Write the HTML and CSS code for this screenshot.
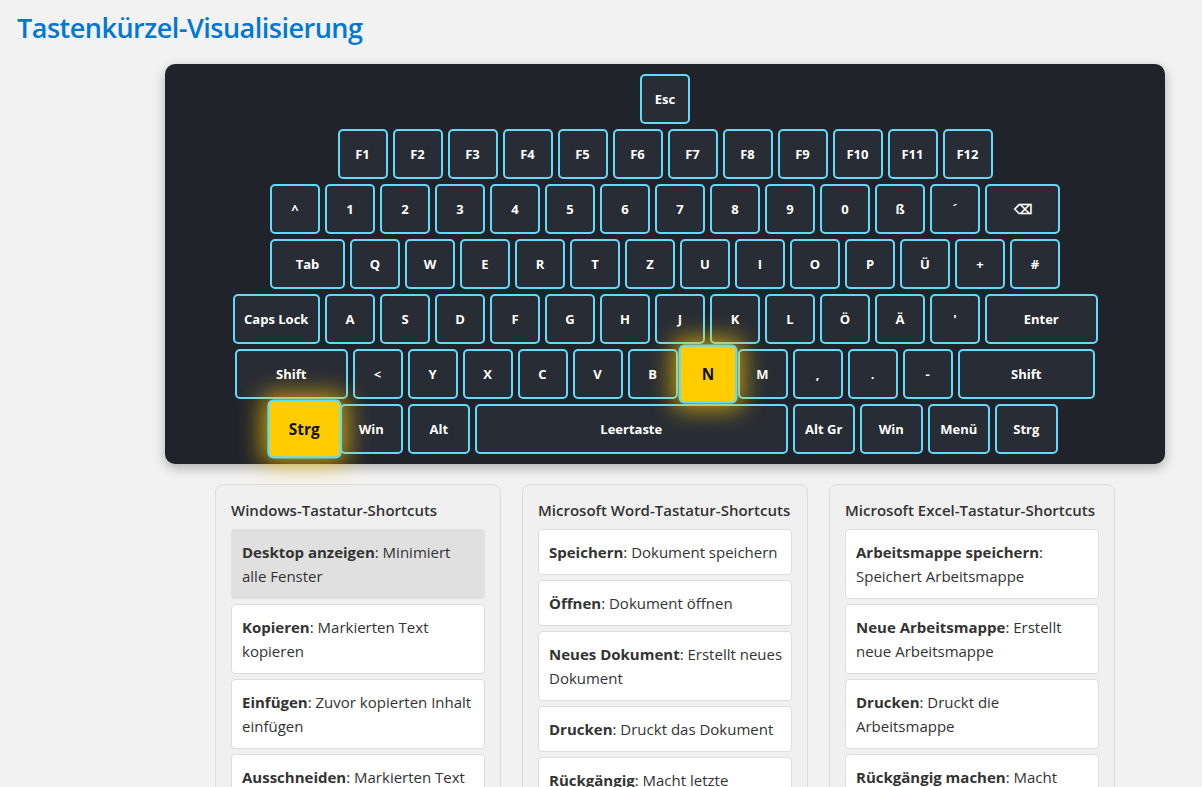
FILE: index.html
```html
<!DOCTYPE html>
<html lang="de">
<head>
<meta charset="utf-8">
<title>Tastenkürzel-Visualisierung</title>
<link rel="stylesheet" href="styles.css">
</head>
<body>
<h1 class="page-title">Tastenkürzel-Visualisierung</h1>
<main class="main">
  <div class="keyboard">
    <div class="row">
      <div class="key">Esc</div>
    </div>
    <div class="row">
      <div class="key">F1</div><div class="key">F2</div><div class="key">F3</div><div class="key">F4</div>
      <div class="key">F5</div><div class="key">F6</div><div class="key">F7</div><div class="key">F8</div>
      <div class="key">F9</div><div class="key">F10</div><div class="key">F11</div><div class="key">F12</div>
    </div>
    <div class="row">
      <div class="key">^</div><div class="key">1</div><div class="key">2</div><div class="key">3</div>
      <div class="key">4</div><div class="key">5</div><div class="key">6</div><div class="key">7</div>
      <div class="key">8</div><div class="key">9</div><div class="key">0</div><div class="key">ß</div>
      <div class="key">´</div><div class="key w15">⌫</div>
    </div>
    <div class="row">
      <div class="key w15">Tab</div><div class="key">Q</div><div class="key">W</div><div class="key">E</div>
      <div class="key">R</div><div class="key">T</div><div class="key">Z</div><div class="key">U</div>
      <div class="key">I</div><div class="key">O</div><div class="key">P</div><div class="key">Ü</div>
      <div class="key">+</div><div class="key">#</div>
    </div>
    <div class="row">
      <div class="key w175">Caps Lock</div><div class="key">A</div><div class="key">S</div><div class="key">D</div>
      <div class="key">F</div><div class="key">G</div><div class="key">H</div><div class="key">J</div>
      <div class="key">K</div><div class="key">L</div><div class="key">Ö</div><div class="key">Ä</div>
      <div class="key">'</div><div class="key w225">Enter</div>
    </div>
    <div class="row">
      <div class="key w225">Shift</div><div class="key">&lt;</div><div class="key">Y</div><div class="key">X</div>
      <div class="key">C</div><div class="key">V</div><div class="key">B</div><div class="key active">N</div>
      <div class="key">M</div><div class="key">,</div><div class="key">.</div><div class="key">-</div>
      <div class="key w275">Shift</div>
    </div>
    <div class="row">
      <div class="key w125 active">Strg</div><div class="key w125">Win</div><div class="key w125">Alt</div>
      <div class="key w625">Leertaste</div><div class="key w125">Alt Gr</div><div class="key w125">Win</div>
      <div class="key w125">Menü</div><div class="key w125">Strg</div>
    </div>
  </div>

  <div class="cards">
    <section class="card">
      <h3 class="card-title">Windows-Tastatur-Shortcuts</h3>
      <ul class="list">
        <li class="item selected"><b>Desktop anzeigen</b>: Minimiert alle Fenster</li>
        <li class="item"><b>Kopieren</b>: Markierten Text kopieren</li>
        <li class="item"><b>Einfügen</b>: Zuvor kopierten Inhalt einfügen</li>
        <li class="item"><b>Ausschneiden</b>: Markierten Text ausschneiden</li>
        <li class="item"><b>Rückgängig</b>: Letzte Aktion rückgängig machen</li>
      </ul>
    </section>
    <section class="card">
      <h3 class="card-title">Microsoft Word-Tastatur-Shortcuts</h3>
      <ul class="list">
        <li class="item"><b>Speichern</b>: Dokument speichern</li>
        <li class="item"><b>Öffnen</b>: Dokument öffnen</li>
        <li class="item"><b>Neues Dokument</b>: Erstellt neues Dokument</li>
        <li class="item"><b>Drucken</b>: Druckt das Dokument</li>
        <li class="item"><b>Rückgängig</b>: Macht letzte Aktion&nbsp;rückgängig</li>
      </ul>
    </section>
    <section class="card">
      <h3 class="card-title">Microsoft Excel-Tastatur-Shortcuts</h3>
      <ul class="list">
        <li class="item"><b>Arbeitsmappe speichern</b>: Speichert Arbeitsmappe</li>
        <li class="item"><b>Neue Arbeitsmappe</b>: Erstellt neue Arbeitsmappe</li>
        <li class="item"><b>Drucken</b>: Druckt die Arbeitsmappe</li>
        <li class="item"><b>Rückgängig machen</b>: Macht letzte Aktion rückgängig</li>
      </ul>
    </section>
  </div>
</main>
</body>
</html>
```

FILE: styles.css
```css
* { box-sizing: border-box; }

body {
  margin: 0;
  padding: 10px 17px 40px;
  background: #f2f2f2;
  font-family: "Open Sans", "Noto Sans", sans-serif;
  color: #333;
}

.page-title {
  margin: 0 0 18px;
  font-size: 27px;
  line-height: 36px;
  font-weight: 600;
  letter-spacing: -0.5px;
  color: #0078d4;
}

.main {
  width: 1000px;
  margin-left: 148px;
}

.keyboard {
  background: #20232a;
  border-radius: 10px;
  padding: 10px 0;
  display: flex;
  flex-direction: column;
  align-items: center;
  gap: 5px;
  box-shadow: 0 4px 12px rgba(0, 0, 0, 0.28);
}

.row {
  display: flex;
  gap: 5px;
}

.key {
  width: 50px;
  height: 50px;
  flex: none;
  display: flex;
  align-items: center;
  justify-content: center;
  background: #282c34;
  border: 2px solid #61dafb;
  border-radius: 5px;
  color: #fff;
  font-size: 13px;
  font-weight: 700;
  white-space: nowrap;
}

.w125 { width: 62.5px; }
.w15 { width: 75px; }
.w175 { width: 87.5px; }
.w225 { width: 112.5px; }
.w275 { width: 137.5px; }
.w625 { width: 312.5px; }

.key.active {
  position: relative;
  z-index: 1;
  background: #ffcc00;
  color: #111;
  transform: scale(1.18);
  box-shadow: 0 0 20px 5px rgba(255, 204, 0, 0.7);
}

.cards {
  width: 900px;
  margin: 20px auto 0;
  display: grid;
  grid-template-columns: repeat(3, 1fr);
  gap: 21px;
  align-items: start;
}

.card {
  background: #f0f0f0;
  border: 1px solid #dcdcdc;
  border-radius: 8px;
  padding: 15px;
}

.card-title {
  margin: 0 0 9px;
  font-size: 15px;
  line-height: 20px;
  font-weight: 600;
  color: #333;
  white-space: nowrap;
}

.list {
  list-style: none;
  margin: 0;
  padding: 0;
  display: flex;
  flex-direction: column;
  gap: 5px;
}

.item {
  background: #fff;
  border: 1px solid #ddd;
  border-radius: 4px;
  padding: 10px 8px 10px 10px;
  font-size: 15px;
  line-height: 24px;
  color: #333;
}

.item b { font-weight: 700; }

.item.selected {
  background: #e0e0e0;
  border-color: #e0e0e0;
}
```
